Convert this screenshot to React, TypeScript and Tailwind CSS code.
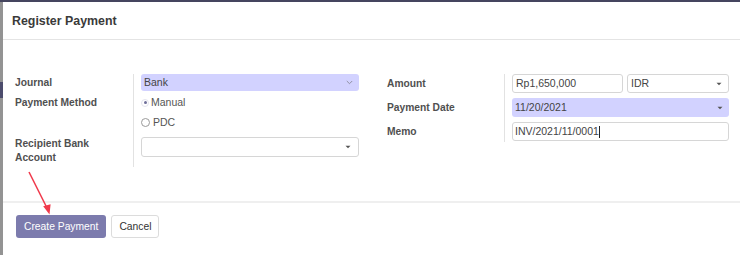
import React from 'react'

function Caret() {
  return (
    <svg width="6" height="4" viewBox="0 0 6 4" className="shrink-0">
      <path d="M0.5 0.8 L5.5 0.8 L3 3.3 Z" fill="#555" />
    </svg>
  )
}

function Chevron() {
  return (
    <svg width="7" height="5" viewBox="0 0 7 5" className="shrink-0">
      <path d="M0.8 1 L3.5 3.7 L6.2 1" fill="none" stroke="#8a8a9a" strokeWidth="0.9" />
    </svg>
  )
}

export default function App() {
  return (
    <div className="w-[740px] h-[255px] relative overflow-hidden bg-[#939393] font-[family-name:Liberation_Sans,Arial,sans-serif]">
      {/* page behind the dialog */}
      <div className="h-[2px] bg-[#45455f]" />
      <div className="mt-[80px] w-[3px] h-[16px] bg-[#4c4c6c]" />

      {/* dialog */}
      <div className="absolute left-[3px] top-[2px] w-[760px] h-[270px] bg-white">
        <div className="h-[38px] border-b border-[#e4e4e4] pl-[9px] pt-[1px] flex items-center">
          <h4 className="text-[12.4px] font-bold text-[#3a3a3a]">Register Payment</h4>
        </div>

        <div className="h-[161px] pt-[34px] pl-[12px] flex items-start">
          {/* left group */}
          <div className="flex">
            <div className="w-[118px] flex flex-col text-[10.25px] font-bold text-[#505050]">
              <div className="h-[17px] flex items-center">Journal</div>
              <div className="h-[15px] mt-[4px] flex items-center">Payment Method</div>
              <div className="h-[15px] mt-[5px]" />
              <div className="mt-[7px] leading-[14px]">
                Recipient Bank
                <br />
                Account
              </div>
            </div>
            <div className="border-l border-[#e2e2e2] pl-[7px] pb-[10px] flex flex-col text-[10.5px] text-[#444]">
              <div className="w-[218px] h-[17px] rounded-[3px] bg-[#d2d2ff] pl-[3px] pr-[6px] flex items-center justify-between">
                <span>Bank</span>
                <Chevron />
              </div>
              <div className="h-[15px] mt-[4px] flex items-center gap-[2px] text-[#555]">
                <span className="w-[8px] h-[8px] rounded-full border border-[#e4e4ee] flex items-center justify-center">
                  <span className="w-[3px] h-[3px] rounded-full bg-[#6f6f9a]" />
                </span>
                <span>Manual</span>
              </div>
              <div className="h-[15px] mt-[5px] flex items-center gap-[3px] text-[#555]">
                <span className="w-[9px] h-[9px] rounded-full border border-[#9a9a9a]" />
                <span>PDC</span>
              </div>
              <div className="w-[218px] h-[20px] mt-[7px] rounded-[3px] border border-[#d6d6d6] pr-[7px] flex items-center justify-end">
                <Caret />
              </div>
            </div>
          </div>

          {/* right group */}
          <div className="flex ml-[28px]">
            <div className="w-[117px] flex flex-col text-[10.25px] font-bold text-[#505050]">
              <div className="h-[19px] flex items-center">Amount</div>
              <div className="h-[19px] mt-[5px] flex items-center">Payment Date</div>
              <div className="h-[19px] mt-[5px] flex items-center">Memo</div>
            </div>
            <div className="border-l border-[#e2e2e2] pl-[7px] pb-[1px] flex flex-col text-[10.5px] text-[#444]">
              <div className="flex gap-[4px]">
                <div className="w-[111px] h-[19px] rounded-[3px] border border-[#d6d6d6] pl-[3px] flex items-center">
                  Rp1,650,000
                </div>
                <div className="w-[102px] h-[19px] rounded-[3px] border border-[#d6d6d6] pl-[3px] pr-[6px] flex items-center justify-between">
                  <span>IDR</span>
                  <Caret />
                </div>
              </div>
              <div className="w-[217px] h-[19px] mt-[5px] rounded-[3px] bg-[#d2d2ff] pl-[3px] pr-[6px] flex items-center justify-between">
                <span>11/20/2021</span>
                <Caret />
              </div>
              <div className="w-[217px] h-[19px] mt-[5px] rounded-[3px] border border-[#d6d6d6] pl-[2px] flex items-center">
                <span>INV/2021/11/0001</span>
                <span className="w-px h-[12px] bg-[#222]" />
              </div>
            </div>
          </div>
        </div>

        <div className="border-t-2 border-[#efefef] pt-[12px] pl-[13px] flex gap-[5px] text-[10.3px]">
          <button className="h-[23px] px-[8px] rounded-[3px] bg-[#7c7bad] text-white">Create Payment</button>
          <button className="h-[23px] px-[7px] rounded-[3px] border border-[#dcdcdc] bg-white text-[#333]">Cancel</button>
        </div>
      </div>

      {/* annotation arrow */}
      <svg className="absolute left-0 top-0 pointer-events-none" width="740" height="255">
        <line x1="29" y1="172" x2="47" y2="208" stroke="#f0394b" strokeWidth="1.5" />
        <path d="M49.5 214.5 L43.2 206.3 L50.6 204.3 Z" fill="#f0394b" />
      </svg>
    </div>
  )
}
